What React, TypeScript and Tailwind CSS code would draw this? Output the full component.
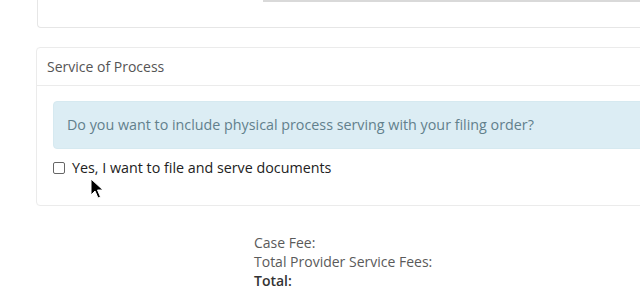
import React from "react";

export default function App() {
  const font = { fontFamily: '"Open Sans", "Liberation Sans", sans-serif' };
  return (
    <div className="relative w-[640px] h-[288px] overflow-hidden bg-white text-[14px]" style={font}>
      {/* top card (cut off) */}
      <div className="ml-[37px] h-[28px] border-l border-b border-[#e6e6e6] rounded-bl-[4px] flex flex-col">
        <div className="ml-auto w-[377px] h-[2px] bg-[#d9d9d9]" />
      </div>

      {/* service of process card */}
      <div className="ml-[36px] mt-[19px] w-[620px] h-[159px] border border-[#ebebeb] rounded-[4px]">
        <div className="h-[38px] border-b border-[#ebebeb] flex items-center pl-[10px] text-[14px] text-[#555]">
          Service of Process
        </div>
        <div className="pl-[16px] pt-[15px]">
          <div className="h-[48px] bg-[#dcedf4] border border-[#d6e9f0] rounded-l-[4px] flex items-center pl-[13px] text-[14.3px] text-[#62808c]">
            Do you want to include physical process serving with your filing order?
          </div>
          <div className="flex items-center mt-[9px] h-[20px]">
            <span className="w-[12px] h-[12px] border border-[#666] rounded-[2px] bg-white" />
            <span className="ml-[7px] text-[14.3px] font-medium text-[#222]">Yes, I want to file and serve documents</span>
          </div>
        </div>
      </div>

      {/* fees */}
      <div className="ml-[254px] mt-[27px] text-[14px] leading-[19px] text-[#5a5a5a]">
        <div>Case Fee:</div>
        <div>Total Provider Service Fees:</div>
        <div className="font-semibold text-[#333]">Total:</div>
      </div>

      {/* mouse cursor */}
      <svg className="absolute left-[90px] top-[178px]" width="16" height="22" viewBox="0 0 16 22">
        <path d="M1 1 L1 17 L5 13 L8 20 L10.5 19 L7.5 12 L13 12 Z" fill="#000" stroke="#fff" strokeWidth="1" strokeLinejoin="round" />
      </svg>
    </div>
  );
}
